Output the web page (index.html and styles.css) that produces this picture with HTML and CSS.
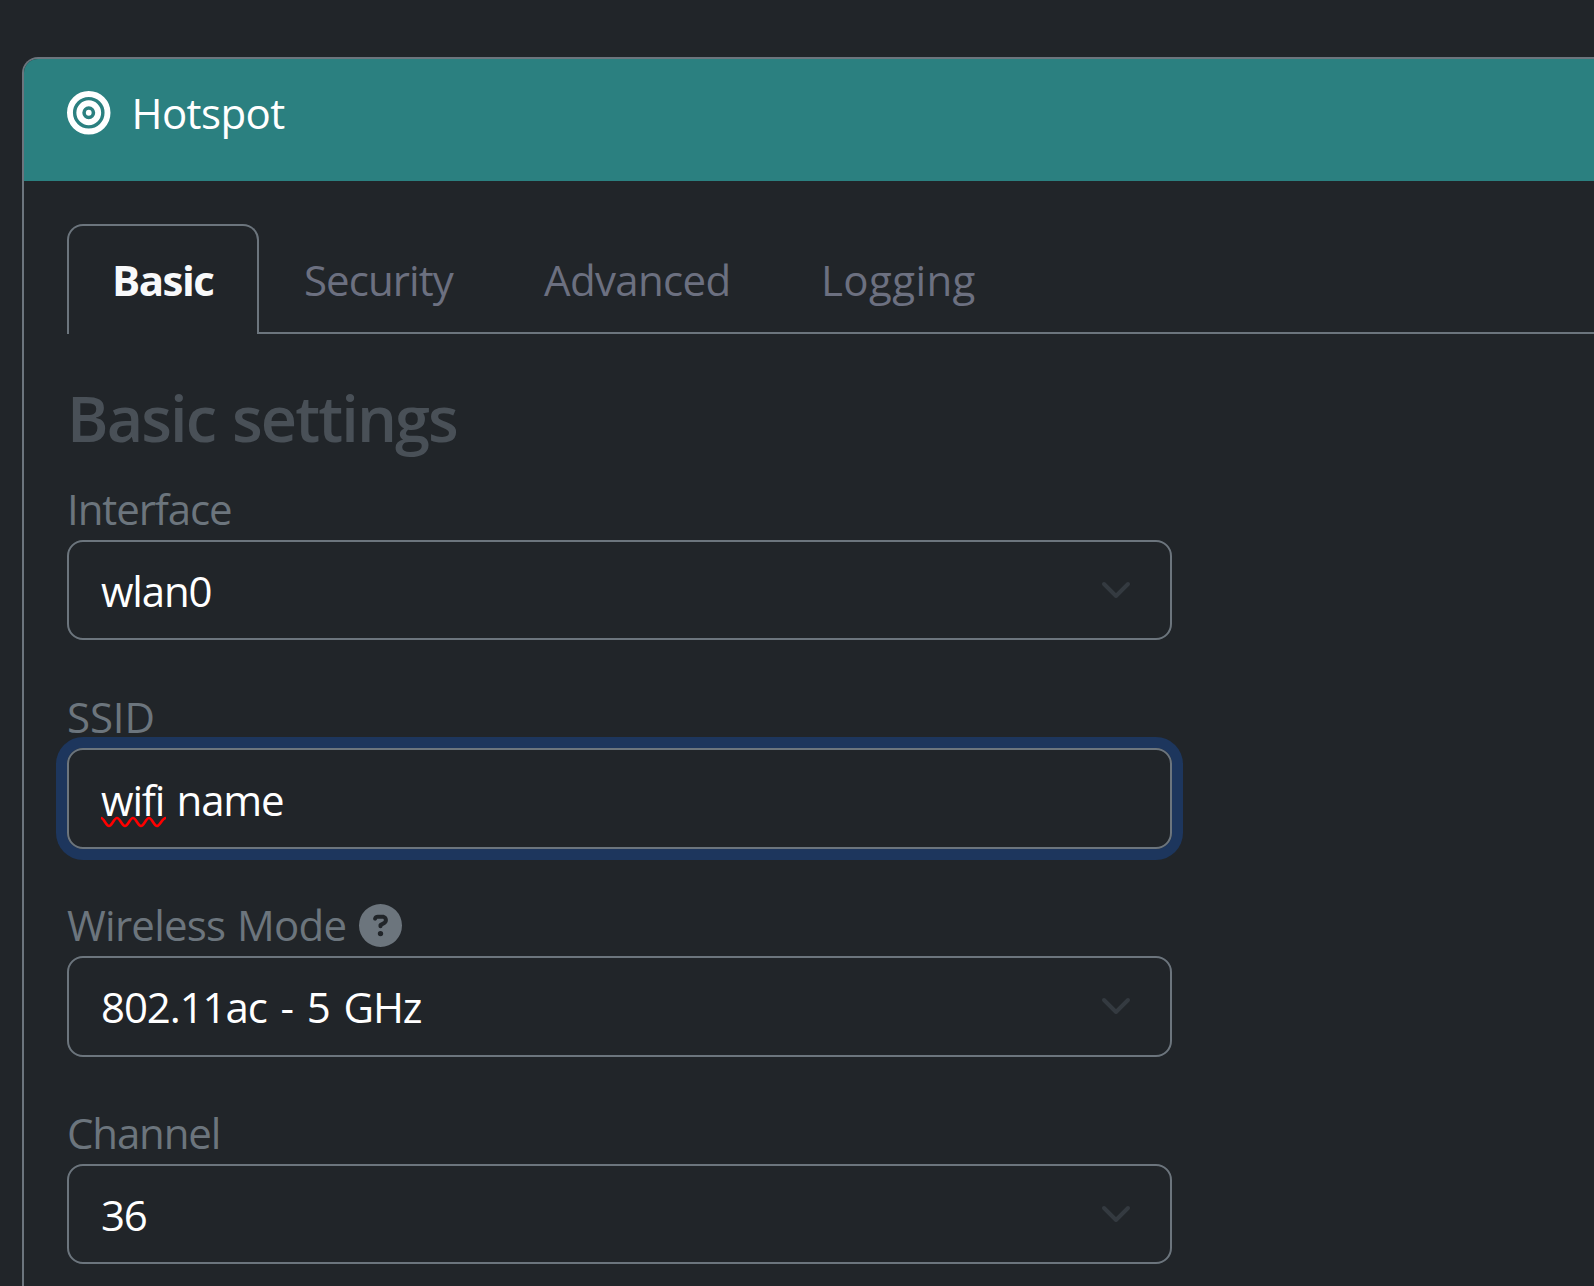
FILE: index.html
```html
<!DOCTYPE html>
<html lang="en">
<head>
<meta charset="utf-8">
<title>Hotspot</title>
<link rel="stylesheet" href="styles.css">
</head>
<body>
<main class="card">
  <header class="card-header">
    <svg class="header-icon" viewBox="0 0 512 512" aria-hidden="true">
      <g fill="none" stroke="currentColor" stroke-width="70"><circle cx="256" cy="256" r="221"/><circle cx="256" cy="256" r="111"/></g>
      <circle cx="256" cy="256" r="34" fill="currentColor"/>
    </svg>
    <span class="header-title">Hotspot</span>
  </header>
  <div class="card-body">
    <nav class="tabs">
      <a class="tab tab-basic active">Basic</a>
      <a class="tab tab-security">Security</a>
      <a class="tab tab-advanced">Advanced</a>
      <a class="tab tab-logging">Logging</a>
    </nav>
    <h4 class="title">Basic settings</h4>
    <form class="fields">
      <div class="field">
        <label class="label label-interface">Interface</label>
        <div class="control"><span class="value-interface">wlan0</span>
          <svg class="chevron" viewBox="0 0 16 16"><path d="m2 5 6 6 6-6"/></svg></div>
      </div>
      <div class="field">
        <label class="label label-ssid">SSID</label>
        <div class="control tall focused"><span class="value-ssid"><span class="misspelled">wifi<svg class="squiggle" viewBox="0 0 68 12"><path d="M1 2C4 2 6 10 9 10S14 2 17 2S22 10 25 10S30 2 33 2S38 10 41 10S46 2 49 2S54 10 57 10S62 2 66 2"/></svg></span> name</span></div>
      </div>
      <div class="field">
        <label class="label label-mode"><span>Wireless Mode</span>
          <svg class="help" viewBox="0 0 512 512"><path fill="currentColor" d="M256 512A256 256 0 1 0 256 0a256 256 0 1 0 0 512zM169.8 165.3c7.9-22.3 29.1-37.3 52.8-37.3h58.3c34.9 0 63.1 28.3 63.1 63.1c0 22.6-12.1 43.5-31.7 54.8L280 264.4c-.2 13-10.9 23.6-24 23.6c-13.3 0-24-10.7-24-24V250.5c0-8.6 4.6-16.5 12.1-20.8l44.3-25.4c4.7-2.7 7.6-7.7 7.6-13.1c0-8.4-6.8-15.1-15.1-15.1H222.6c-3.4 0-6.4 2.1-7.5 5.3l-.4 1.2c-4.4 12.5-18.2 19-30.6 14.6s-19-18.2-14.6-30.6l.4-1.2zM224 352a32 32 0 1 1 64 0 32 32 0 1 1 -64 0z"/></svg></label>
        <div class="control tall"><span class="value-mode">802.11ac - 5 GHz</span>
          <svg class="chevron" viewBox="0 0 16 16"><path d="m2 5 6 6 6-6"/></svg></div>
      </div>
      <div class="field">
        <label class="label label-channel">Channel</label>
        <div class="control"><span class="value-channel">36</span>
          <svg class="chevron" viewBox="0 0 16 16"><path d="m2 5 6 6 6-6"/></svg></div>
      </div>
    </form>
  </div>
</main>
</body>
</html>
```
FILE: styles.css
```css
* { box-sizing: border-box; }

body {
  margin: 0;
  height: 100vh;
  padding: 57px 0 0 22px;
  overflow: hidden;
  background: #212529;
  color: #fff;
  font: 42px/60px "Open Sans", "Noto Sans", sans-serif;
}

.card {
  height: 100%;
  border: 2px solid #6c757d;
  border-width: 2px 0 0 2px;
  border-radius: 16px 0 0 0;
  overflow: hidden;
}

.card-header {
  display: flex;
  height: 122px;
  padding: 24px 43px 0;
  background: #2b8080;
}
.header-icon { width: 43.5px; height: 43.5px; margin-top: 8px; }
.header-title { margin-left: 21px; letter-spacing: -0.58px; }

.card-body { padding: 43px 0 0 43px; }

.tabs {
  display: flex;
  height: 110px;
  background: linear-gradient(#6c757d, #6c757d) 0 100% / 100% 2px no-repeat;
}
.tab {
  border: 2px solid transparent;
  border-bottom: 0;
  padding: 24px 0 0 43px;
  color: #6c7080;
}
.tab.active {
  border-color: #6c757d;
  border-radius: 16px 16px 0 0;
  background: #212529;
  color: #f8f9fa;
  font-weight: 700;
}
.tab-basic { width: 192px; letter-spacing: -1.5px; }
.tab-security { width: 240px; letter-spacing: -0.92px; }
.tab-advanced { width: 277px; letter-spacing: -0.65px; }
.tab-logging { letter-spacing: 0.4px; }

.title {
  margin: 44px 0 21px;
  color: #495057;
  font-size: 63px;
  font-weight: 600;
  line-height: 80px;
  letter-spacing: -1.9px;
  word-spacing: 2.5px;
}

.fields { display: flex; flex-direction: column; width: 1105px; }
.field { height: 208px; flex: none; }

.label {
  display: flex;
  height: 61px;
  color: #6c757d;
}
.label-interface { letter-spacing: -1.1px; }
.label-ssid { letter-spacing: -0.1px; }
.label-mode { letter-spacing: -0.75px; word-spacing: 1.5px; }
.label-channel { letter-spacing: -1.15px; }
.help { width: 43px; height: 43px; margin: 9px 0 0 13px; }

.control {
  display: flex;
  align-items: center;
  justify-content: space-between;
  height: 100px;
  padding: 1px 38px 0 32px;
  border: 2px solid #6c757d;
  border-radius: 16px;
  white-space: nowrap;
}
.control.tall { height: 101px; padding-top: 0; }
.control.focused { padding-top: 2px; box-shadow: 0 0 0 11px #1d365d; }

.value-interface { letter-spacing: -1.2px; }
.value-ssid { letter-spacing: -1.15px; word-spacing: 2.5px; }
.value-mode { letter-spacing: -1.1px; word-spacing: 4px; }
.value-channel { letter-spacing: -1.2px; }

.chevron { width: 32px; height: 32px; margin-top: -1px; }
.chevron path {
  fill: none;
  stroke: #343a40;
  stroke-width: 2;
  stroke-linecap: round;
  stroke-linejoin: round;
}

.misspelled { position: relative; }
.squiggle {
  position: absolute;
  left: -1px;
  top: 45px;
  width: 68px;
  height: 12px;
}
.squiggle path { fill: none; stroke: #f00; stroke-width: 2.6; }
```
